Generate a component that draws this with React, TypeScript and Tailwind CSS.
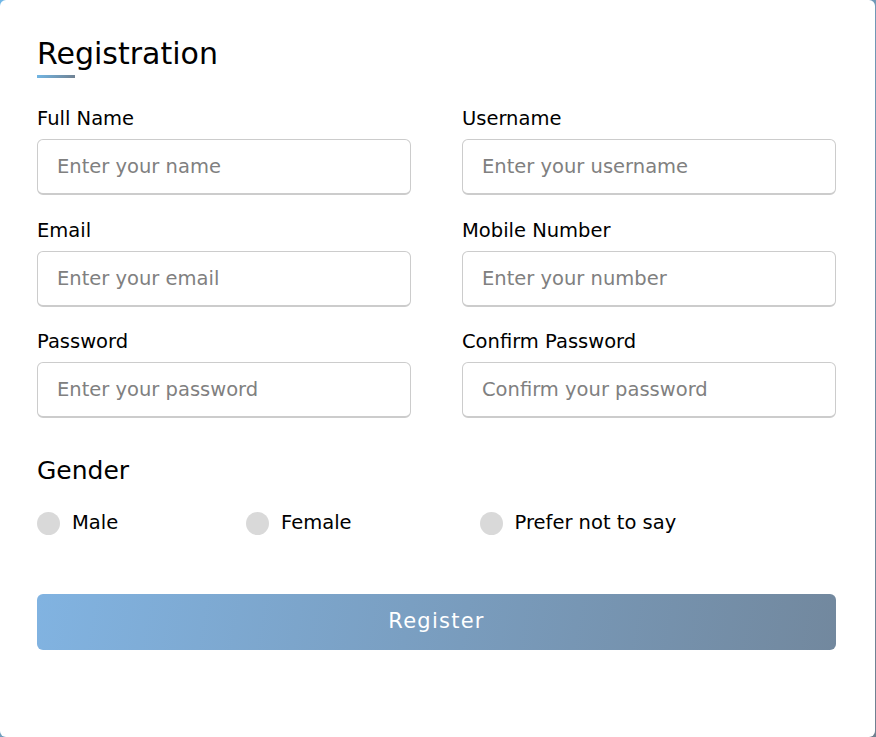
import React from 'react';

type Field = { label: string; placeholder: string; type?: string };

const fields: Field[] = [
  { label: 'Full Name', placeholder: 'Enter your name' },
  { label: 'Username', placeholder: 'Enter your username' },
  { label: 'Email', placeholder: 'Enter your email', type: 'email' },
  { label: 'Mobile Number', placeholder: 'Enter your number' },
  { label: 'Password', placeholder: 'Enter your password', type: 'password' },
  { label: 'Confirm Password', placeholder: 'Confirm your password', type: 'password' }
];

const genders = ['Male', 'Female', 'Prefer not to say'];

export default function App() {
  return (
    <div className="h-[737px] w-[876px] overflow-hidden bg-[linear-gradient(135deg,#71b7e6,#708090)] font-['DejaVu_Sans',sans-serif]">
      <div className="h-[737px] w-[875px] rounded-[6px] bg-white pl-[37px] pr-[39px] pt-[33px]">
        <div className="text-[30px] leading-[42px] text-black">Registration</div>
        <div className="h-[3px] w-[38px] bg-[linear-gradient(135deg,#71b7e6,#708090)]" />

        <form className="mt-[27px]" onSubmit={(e) => e.preventDefault()}>
          <div className="grid grid-cols-2 gap-x-[51px] gap-y-[21.5px]">
            {fields.map((f) => (
              <div key={f.label} className="flex flex-col">
                <span className="mb-[7px] text-[19.5px] leading-[27px] text-black">
                  {f.label}
                </span>
                <input
                  type={f.type ?? 'text'}
                  placeholder={f.placeholder}
                  className="h-[56px] rounded-[6px] border border-b-2 border-[#cccccc] px-[19px] text-[19.5px] text-black outline-none placeholder:text-[#808080]"
                />
              </div>
            ))}
          </div>

          <div className="mt-[36px] text-[25px] leading-[34px] text-black">Gender</div>
          <div className="mt-[21px] flex w-[80%] justify-between">
            {genders.map((g) => (
              <label key={g} className="flex items-center gap-[12px]">
                <span className="h-[23px] w-[23px] rounded-full bg-[#d9d9d9]" />
                <span className="text-[19.5px] leading-[28px] text-black">{g}</span>
              </label>
            ))}
          </div>

          <button
            type="submit"
            className="mt-[57px] h-[56px] w-full rounded-[6px] bg-[linear-gradient(100deg,#81b3e1,#72889e)] text-[21px] tracking-[1.25px] text-white"
          >
            Register
          </button>
        </form>
      </div>
    </div>
  );
}
